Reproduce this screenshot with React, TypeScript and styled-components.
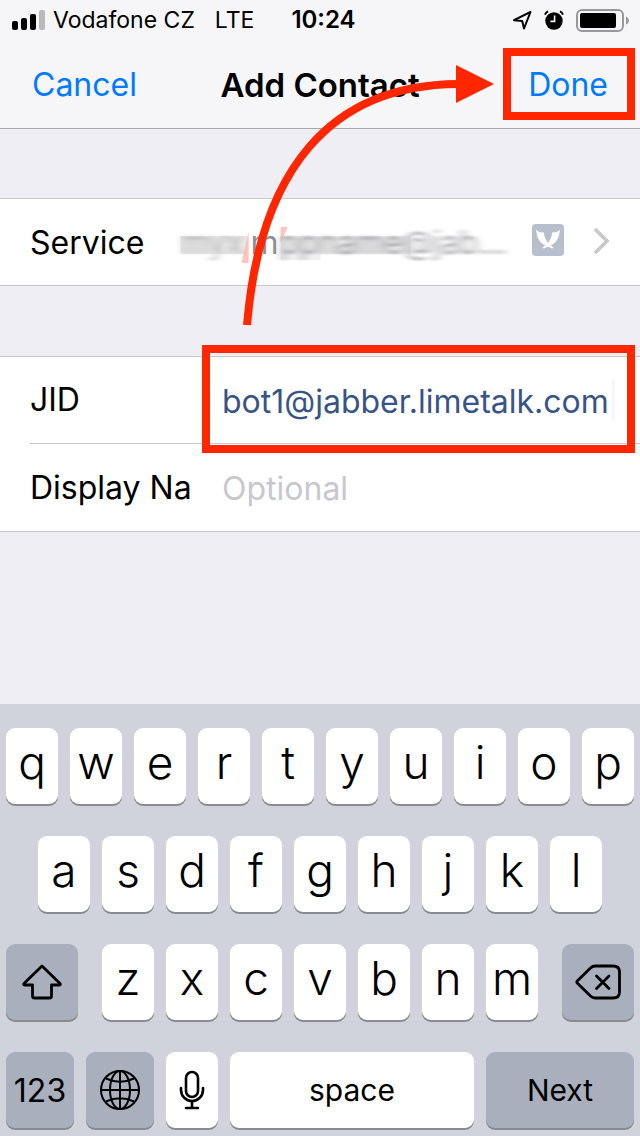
import React from 'react';
import styled, { createGlobalStyle } from 'styled-components';

const RED = '#ff2600';
const BLUE = '#007aff';
const LINE = '#c8c7cc';

const GlobalStyle = createGlobalStyle`
  * { box-sizing: border-box; }
  body {
    margin: 0;
    background: #efeef4;
    color: #000;
    font-family: Inter, "Liberation Sans", sans-serif;
  }
  button, input { font: inherit; color: inherit; }
`;

const Screen = styled.div`
  position: relative;
  display: flex;
  flex-direction: column;
  min-height: 100vh;
  overflow: hidden;
`;

const Header = styled.header`
  background: #f6f6f8;
  border-bottom: 1px solid #a9a8ae;
`;

const StatusBar = styled.div`
  display: grid;
  grid-template-columns: 1fr auto 1fr;
  align-items: center;
  height: 40px;
  padding: 0 11px 0 12px;
  font-size: 23px;
  line-height: 40px;
`;

const Carrier = styled.div`
  display: flex;
  align-items: center;
  gap: 8px;
`;

const Network = styled.span`
  margin-left: 12px;
`;

const Clock = styled.time`
  padding-left: 6px;
  font-size: 24px;
  font-weight: 600;
`;

const Indicators = styled.div`
  display: flex;
  align-items: center;
  justify-content: flex-end;
  gap: 12px;
`;

const NavBar = styled.nav`
  display: grid;
  grid-template-columns: 1fr auto 1fr;
  align-items: center;
  height: 88px;
  padding: 2px 32px 0;
`;

const Title = styled.h1`
  margin: 0;
  font-size: 33px;
  font-weight: 600;
  line-height: 40px;
`;

const NavButton = styled.button<{ $end?: boolean }>`
  position: relative;
  justify-self: ${(p) => (p.$end ? 'end' : 'start')};
  padding: 0;
  border: 0;
  background: none;
  color: ${BLUE};
  font-size: 32px;
  line-height: 40px;
`;

const Callout = styled.span<{ $inset: string }>`
  position: absolute;
  z-index: 1;
  inset: ${(p) => p.$inset};
  border: 8px solid ${RED};
  pointer-events: none;
`;

const Form = styled.main`
  display: flex;
  flex-direction: column;
  flex: 1;
  gap: 70px;
  padding: 69px 0;
`;

const Group = styled.section`
  background: #fff;
  border-top: 1px solid ${LINE};
  border-bottom: 1px solid ${LINE};
`;

const Row = styled.div`
  position: relative;
  display: flex;
  align-items: center;
  height: 86px;
  margin-left: 30px;
  font-size: 32px;
  line-height: 40px;

  & + & {
    height: 88px;
    border-top: 1px solid ${LINE};
  }
`;

const ServiceRow = styled.button`
  display: flex;
  align-items: center;
  width: 100%;
  height: 86px;
  padding: 2px 30px 0;
  border: 0;
  background: none;
  font-size: 32px;
  line-height: 40px;
  text-align: left;
`;

const Account = styled.svg`
  flex: 1;
  min-width: 0;
  height: 48px;
  margin: 0 16px 0 8px;
`;

const ServiceBadge = styled.svg`
  margin-bottom: 6px;
`;

const Chevron = styled.svg`
  margin: 0 0 4px 29px;
`;

const Label = styled.label`
  flex: none;
  width: 192px;
`;

const Field = styled.input`
  flex: 1;
  min-width: 0;
  height: 42px;
  padding: 2px 0 0;
  border: 0;
  outline: 0;
  background: none;
  color: #385487;

  &::placeholder { color: #c7c7cd; opacity: 1; }
`;

const Caret = styled.span`
  position: absolute;
  right: 25px;
  width: 3px;
  height: 41px;
  background: #f5f6ff;
`;

const Arrow = styled.svg`
  position: absolute;
  top: 60px;
  right: 140px;
  pointer-events: none;
`;

const Keyboard = styled.section`
  display: flex;
  flex-direction: column;
  gap: 32px;
  padding: 24px 6px 8px;
  background: #d0d3db;
`;

const KeyRow = styled.div<{ $indent?: number }>`
  display: flex;
  gap: 12px;
  padding: 0 ${(p) => p.$indent ?? 0}px;
`;

const LetterBlock = styled.div`
  display: flex;
  flex: 436 1 0;
  gap: 12px;
  margin: 0 12px;
`;

const Key = styled.button<{ $grow?: number; $dark?: boolean }>`
  display: flex;
  align-items: center;
  justify-content: center;
  flex: ${(p) => p.$grow ?? 52} 1 0;
  min-width: 0;
  height: 76px;
  padding: 0;
  border: 0;
  border-radius: 9px;
  background: ${(p) => (p.$dark ? '#a9afbd' : '#fff')};
  box-shadow: 0 2px 0 #898b8f;
  font-size: 30px;
  line-height: 56px;
`;

const LetterKey = styled(Key)`
  padding-bottom: 8px;
  font-size: 46px;
  font-weight: 350;
`;

const NumbersKey = styled(Key)`
  padding-top: 2px;
  font-size: 32px;
`;

const letters = (row: string) => row.split('').map((l) => <LetterKey key={l}>{l}</LetterKey>);

const SignalIcon = () => (
  <svg width="33" height="20" viewBox="0 0 33 20" aria-hidden="true">
    <rect x="0" y="11" width="6" height="9" rx="2" />
    <rect x="9" y="8" width="6" height="12" rx="2" />
    <rect x="18" y="4" width="6" height="16" rx="2" />
    <rect x="27" y="0" width="6" height="20" rx="2" fill="#b9b9bb" />
  </svg>
);

const LocationIcon = () => (
  <svg width="20" height="20" viewBox="0 0 20 20" aria-hidden="true">
    <path d="M2 10.200 L18.500 2 L12 18.500 L10.200 11 Z" fill="none" stroke="#000" strokeWidth="2" strokeLinejoin="round" />
  </svg>
);

const AlarmIcon = () => (
  <svg width="20" height="20" viewBox="0 0 20 20" aria-hidden="true">
    <circle cx="10" cy="11" r="8.7" />
    <path d="M1 4.6 A6 6 0 0 1 4 1.4 M19 4.6 A6 6 0 0 0 16 1.4" fill="none" stroke="#000" strokeWidth="2" />
    <path d="M10.6 5.5 V11.4 H6.4" fill="none" stroke="#f6f6f8" strokeWidth="1.6" />
  </svg>
);

const BatteryIcon = () => (
  <svg width="53" height="23" viewBox="0 0 53 23" aria-hidden="true">
    <rect x="1" y="1" width="46" height="21" rx="5" fill="none" stroke="#98989b" strokeWidth="2" />
    <rect x="4" y="4" width="36" height="15" rx="2" />
    <path d="M50 7.5 Q53 9 53 11.5 Q53 14 50 15.5 Z" fill="#98989b" />
  </svg>
);

const ServiceIcon = () => (
  <ServiceBadge width="32" height="32" viewBox="0 0 32 32" aria-hidden="true">
    <rect width="32" height="32" rx="4" fill="#b7bfcd" />
    <g fill="#fff">
      <path d="M4 6 Q8 9 12 8.500 Q12 14 16 19 L21.500 23.500 L20 24.500 L15 22 Q5 19 4 6 Z" />
      <path d="M28 6 Q24 9 20 8.500 Q20 14 16 19 L10.500 23.500 L12 24.500 L17 22 Q27 19 28 6 Z" />
    </g>
  </ServiceBadge>
);

const ShiftIcon = () => (
  <svg width="40" height="36" viewBox="0 0 40 36" aria-hidden="true">
    <path d="M20 2 L38 19.500 Q39 21 37 21 H29.500 V32 Q29.500 34 27.500 34 H12.500 Q10.500 34 10.500 32 V21 H3 Q1 21 2 19.500 Z" fill="none" stroke="#000" strokeWidth="2.800" strokeLinejoin="round" />
  </svg>
);

const DeleteIcon = () => (
  <svg width="46" height="36" viewBox="0 0 46 36" aria-hidden="true">
    <g fill="none" stroke="#000" strokeWidth="2.800" strokeLinecap="round" strokeLinejoin="round">
      <path d="M20 2 H38 Q44.500 2 44.500 8 V28 Q44.500 34 38 34 H20 Q17.500 34 15.500 32 L2.500 19.300 Q1 18 2.500 16.700 L15.500 4 Q17.500 2 20 2 Z" />
      <path d="M21.500 12 L34 24.500 M34 12 L21.500 24.500" />
    </g>
  </svg>
);

const GlobeIcon = () => (
  <svg width="40" height="40" viewBox="0 0 40 40" aria-hidden="true">
    <g fill="none" stroke="#000" strokeWidth="2">
      <circle cx="20" cy="20" r="19" />
      <ellipse cx="20" cy="20" rx="10" ry="19" />
      <path d="M20 1 V39 M1 20 H39 M6 8.500 Q20 15 34 8.500 M6 31.500 Q20 25 34 31.500" />
    </g>
  </svg>
);

const MicIcon = () => (
  <svg width="26" height="40" viewBox="0 0 26 40" aria-hidden="true">
    <g fill="none" stroke="#000" strokeWidth="2.600" strokeLinecap="round">
      <rect x="7" y="2" width="12" height="25" rx="6" />
      <path d="M2 18 V20 A11 11 0 0 0 24 20 V18 M13 31 V38 M7 38 H19" />
    </g>
  </svg>
);

export default function App() {
  return (
    <Screen>
      <GlobalStyle />
      <Header>
        <StatusBar>
          <Carrier>
            <SignalIcon />
            <span>Vodafone CZ</span>
            <Network>LTE</Network>
          </Carrier>
          <Clock>10:24</Clock>
          <Indicators>
            <LocationIcon />
            <AlarmIcon />
            <BatteryIcon />
          </Indicators>
        </StatusBar>
        <NavBar>
          <NavButton type="button">Cancel</NavButton>
          <Title>Add Contact</Title>
          <NavButton type="button" $end>
            Done
            <Callout $inset="-17px -27px -15px -25px" />
          </NavButton>
        </NavBar>
      </Header>

      <Form>
        <Group>
          <ServiceRow type="button">
            <span>Service</span>
            <Account viewBox="0 0 340 48" preserveAspectRatio="xMaxYMid meet" aria-hidden="true">
              <defs>
                <filter id="smear" x="-5%" y="-20%" width="110%" height="140%">
                  <feGaussianBlur stdDeviation="4 1" />
                </filter>
              </defs>
              <rect x="5" y="17" width="68" height="18" fill="#ebebeb" />
              <rect x="105" y="35" width="40" height="6" fill="#f1f1f1" />
              <rect x="105" y="17" width="130" height="18" fill="#ededed" />
              <path d="M73 12 V44 H66 Z M105 8 H112 L105 24 Z" fill="#ffc4bb" />
              <g fontSize="32" fill="#8e8e93">
                <text x="5" y="35" opacity="0.6" filter="url(#smear)">myx</text>
                <text x="75" y="35">m</text>
                <text x="104" y="35" opacity="0.8" filter="url(#smear)">ppname@jab...</text>
              </g>
            </Account>
            <ServiceIcon />
            <Chevron width="17" height="28" viewBox="0 0 17 28" aria-hidden="true">
              <path d="M2 2 L14 14 L2 26" fill="none" stroke="#c7c7cc" strokeWidth="3.500" />
            </Chevron>
          </ServiceRow>
        </Group>

        <Group>
          <Row>
            <Label htmlFor="jid">JID</Label>
            <Field id="jid" type="text" defaultValue="bot1@jabber.limetalk.com" />
            <Caret />
            <Callout $inset="-12px 5px -10px 172px" />
          </Row>
          <Row>
            <Label htmlFor="display-name">Display Na</Label>
            <Field id="display-name" type="text" placeholder="Optional" />
          </Row>
        </Group>
      </Form>

      <Keyboard aria-label="Keyboard">
        <KeyRow>{letters('qwertyuiop')}</KeyRow>
        <KeyRow $indent={32}>{letters('asdfghjkl')}</KeyRow>
        <KeyRow>
          <Key $grow={72} $dark aria-label="Shift"><ShiftIcon /></Key>
          <LetterBlock>{letters('zxcvbnm')}</LetterBlock>
          <Key $grow={72} $dark aria-label="Delete"><DeleteIcon /></Key>
        </KeyRow>
        <KeyRow>
          <NumbersKey $grow={68} $dark>123</NumbersKey>
          <Key $grow={68} $dark aria-label="Next keyboard"><GlobeIcon /></Key>
          <Key aria-label="Dictate"><MicIcon /></Key>
          <Key $grow={244}>space</Key>
          <Key $grow={148} $dark>Next</Key>
        </KeyRow>
      </Keyboard>

      <Arrow width="260" height="272" viewBox="240 60 260 272" aria-hidden="true">
        <path d="M247 325 C260 170 330 85 458 84" fill="none" stroke={RED} strokeWidth="8" />
        <path d="M456 65 L494 84 L456 103 Z" fill={RED} />
      </Arrow>
    </Screen>
  );
}
